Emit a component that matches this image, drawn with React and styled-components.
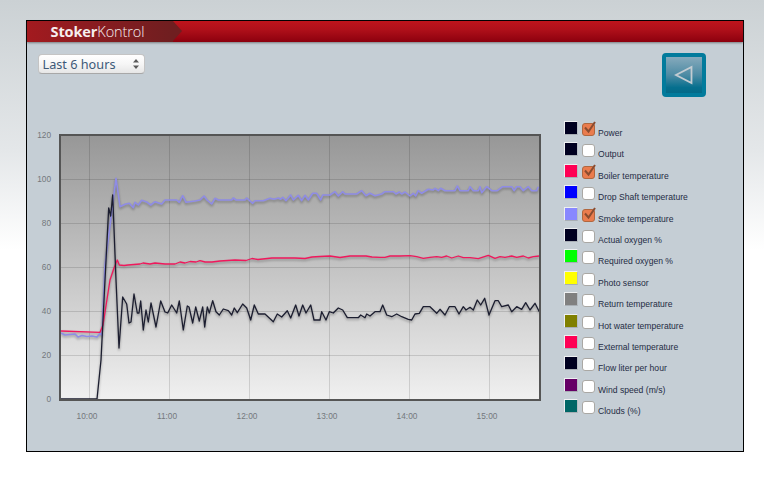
import React from "react";
import styled, { createGlobalStyle } from "styled-components";

const GlobalStyle = createGlobalStyle`
  html, body { margin: 0; padding: 0; }
  body {
    height: 477px;
    overflow: hidden;
    background: linear-gradient(to bottom, #cbd1d4 0, #e4e7e9 150px, #ffffff 250px);
    font-family: "Liberation Sans", Arial, sans-serif;
  }
`;

const Page = styled.div`
  box-sizing: border-box;
  width: 764px;
  padding: 20px 20px 0 26px;
`;

const Panel = styled.div`
  box-sizing: border-box;
  width: 718px;
  height: 432px;
  border: 1px solid #000;
  border-width: 1px 1.5px 1.5px 1.5px;
  background: #c5ced5;
  display: flex;
  flex-direction: column;
`;

const Header = styled.div`
  height: 21px;
  flex: none;
  background: linear-gradient(to bottom, #bf141c 0, #b0101a 40%, #8c000e 100%);
  box-shadow: 0 1px 2px rgba(60, 60, 60, 0.55);
  display: flex;
`;

const LogoPlate = styled.div`
  position: relative;
  width: 146px;
  padding-left: 23.5px;
  box-sizing: border-box;
  background: linear-gradient(to right, #a31a1f 0, #8c1c20 40%, #6f1e20 100%);
  display: flex;
  align-items: center;

  &::after {
    content: "";
    position: absolute;
    left: 146px;
    top: 0;
    border-style: solid;
    border-width: 10.5px 0 10.5px 9px;
    border-color: transparent transparent transparent #6f1e20;
  }
`;

const LogoText = styled.div`
  color: #f6eeee;
  font-family: "Open Sans", "Noto Sans", sans-serif;
  font-size: 14.5px;
  letter-spacing: -0.1px;
  line-height: 21px;
  font-weight: 700;

  span {
    font-weight: 300;
  }
`;

const Toolbar = styled.div`
  flex: none;
  height: 79px;
  box-sizing: border-box;
  padding: 11px 37px 0 10.5px;
  display: flex;
  justify-content: space-between;
  align-items: flex-start;
`;

const SelectWrap = styled.div`
  position: relative;
  width: 107px;
  height: 20px;
  margin-top: 1px;
`;

const RangeSelect = styled.select`
  appearance: none;
  box-sizing: border-box;
  width: 100%;
  height: 100%;
  padding: 0 0 0 4px;
  border: 1px solid #c4c4c4;
  border-bottom-color: #a8a8a8;
  border-radius: 4px;
  background: linear-gradient(to bottom, #ffffff 0, #f6f6f6 50%, #e6e6e6 100%);
  color: #3d5a78;
  font-family: "Noto Sans", "Open Sans", sans-serif;
  font-size: 12.7px;
  line-height: 18px;
  outline: none;
`;

const SelectArrows = styled.svg`
  position: absolute;
  right: 5px;
  top: 4px;
  width: 8px;
  height: 12px;
  pointer-events: none;
`;

const BackButton = styled.button`
  box-sizing: border-box;
  width: 44px;
  height: 44px;
  padding: 0;
  border: 4px solid #027b9c;
  border-radius: 4px;
  background: linear-gradient(to bottom, #86aabc 0, #4d8ba4 50%, #056f8e 85%, #056a88 100%);
  display: flex;
  align-items: center;
  justify-content: center;
`;

const Content = styled.div`
  flex: 1;
  display: flex;
  align-items: flex-start;
`;

const ChartWrap = styled.div`
  flex: none;
  width: 537px;
  height: 300px;
  margin-top: 1px;
`;

const Legend = styled.ul`
  list-style: none;
  margin: 0;
  padding: 0;
  display: flex;
  flex-direction: column;
`;

const LegendRow = styled.li`
  height: 21.4px;
  display: flex;
  align-items: flex-start;
`;

const Swatch = styled.span`
  box-sizing: border-box;
  flex: none;
  width: 14px;
  height: 14px;
  background: ${(p) => p.$color};
  border: 1px solid #eef0f2;
  border-right-color: #b8bec4;
  border-bottom-color: #a8aeb4;
`;

const CheckLabel = styled.label`
  display: flex;
  align-items: flex-start;
  margin-left: 4px;
`;

const CheckWrap = styled.span`
  position: relative;
  flex: none;
  width: 13px;
  height: 13px;
  margin-top: 2px;
`;

const CheckInput = styled.input`
  appearance: none;
  box-sizing: border-box;
  display: block;
  margin: 0;
  width: 13px;
  height: 13px;
  border: 1px solid #aaa8a4;
  border-radius: 3px;
  background: #fff;

  &:checked {
    background: #ea7c4e;
    border-color: #b0673f;
  }
`;

const CheckMark = styled.svg`
  position: absolute;
  left: 1px;
  top: -2px;
  width: 13px;
  height: 13px;
  pointer-events: none;
`;

const LabelText = styled.span`
  margin: 6px 0 0 3px;
  font-size: 8.6px;
  line-height: 12px;
  color: #1f2c44;
  white-space: nowrap;
`;

const AxisText = styled.text`
  font-family: "Liberation Sans", Arial, sans-serif;
  font-size: 8.3px;
  fill: #74787c;
`;

const legendItems = [
  { name: "Power", color: "#000020", checked: true },
  { name: "Output", color: "#000020" },
  { name: "Boiler temperature", color: "#ff0055", checked: true },
  { name: "Drop Shaft temperature", color: "#0000ff" },
  { name: "Smoke temperature", color: "#8888ff", checked: true },
  { name: "Actual oxygen %", color: "#000020" },
  { name: "Required oxygen %", color: "#00ff00" },
  { name: "Photo sensor", color: "#ffff00" },
  { name: "Return temperature", color: "#808080" },
  { name: "Hot water temperature", color: "#808000" },
  { name: "External temperature", color: "#ff0055" },
  { name: "Flow liter per hour", color: "#000020" },
  { name: "Wind speed (m/s)", color: "#660066" },
  { name: "Clouds (%)", color: "#006666" },
];

// chart is drawn in page pixels, the viewBox shifts it to the wrapper
const yTicks = [
  [120, 135],
  [100, 179],
  [80, 223],
  [60, 267],
  [40, 311],
  [20, 355],
  [0, 399],
];
const xTicks = [
  ["10:00", 89],
  ["11:00", 169],
  ["12:00", 249],
  ["13:00", 329],
  ["14:00", 409],
  ["15:00", 489],
];

const power =
  "61,399 97,399 101,360 105,280 108.7,208 110.7,216 112.7,195 116,280 119,348 122.7,297 125,301 126.7,304 129,323 131,322 134,294 137.3,313 139,313 140.7,301 143.3,330 146,310 148.3,322 151,303 156,327 160.7,301 165,312 167.7,313 171.7,305 176.7,313 179.3,301 183.3,330 187.3,306 189,307 192.7,323 195.7,307 199.3,321 202.7,307 204.7,327 207.3,307 209.3,313 212.7,300.7 216,311.7 219.3,315 223.3,309 228.3,310.7 231.7,315 234.3,308 237.3,312.7 242.7,304 246.7,308 250.7,320 254.3,305 258.3,314 265,314 273.3,321.7 277.3,314 281.7,317 287.3,310.7 290.7,318 295.7,305 299,316 302.7,305 306,313 310.7,305 314,320 320,320 321.7,311.7 326,320 329.3,311.7 333.3,313 338.3,308 342.7,310 347.3,317.7 358.3,317.7 360.7,315 365,317.7 366.7,314 370,316 375,311.7 380,311.7 382.7,305 386.7,315 391.7,316.7 396.7,314 401.7,316.7 408.3,319.3 411.7,320 415,314 419.3,313.3 423.3,306.7 430,306.7 436.7,313.3 440,309.3 445,315 449.3,306.7 455,306.7 459,314 463.3,306.7 466,310 470,307.3 473.3,310 477.3,300 480.7,305 484.7,298.3 489,315 495,300.7 498.3,300.7 501.7,306.7 508.3,305 511.7,311.7 516.7,306.7 521.7,309.3 525.7,302.7 530,310 535,303.3 539.3,311.7";

const boiler =
  "61,331 100,332.3 103,325 110,280 114,268 117.3,260 119.3,265 124,265.5 128,265 140,264 143,263 150,264 155,263 165,264 175,264 180,262 185,263 190,261.5 196,262 200,260.7 205,262 212,262 220,261 235,260 246,260.5 252,258.5 258,259.5 272,258 285,258 295,258 305,258.5 312,257 320,256.5 330,256 340,257.5 350,256 356,256 366,256 372,257 380,257.3 385,257.3 390,256 400,256 410,255.7 416.7,256.7 423.3,258.3 430,257.3 436.7,256.7 441.7,257.3 446.7,256 451.7,258 458.3,256 463.3,257.7 470,257.7 478.3,258.7 488.3,255.3 495,258.3 500,256.7 505,257.3 511.7,256 516.7,257.3 523.3,256 528.3,258 533.3,256.7 539.3,256";

const smoke =
  "61,333 65,335 70,334.5 75,334 78,337 82,335.5 87,336.5 92,336 97,337 100,333.5 102,335 105,265 116,178.3 120,206.7 125,204.3 129.3,203.3 133.3,207.7 135,202.3 138.3,205 141.7,200.3 147.3,202.3 150.7,205 155,201.7 161.7,204 165,200 176.7,200 179.3,202.3 182.7,195.7 186,202.3 195,201 200,200 204,196 207,200 211.7,204 215,198.3 218.3,200 231.7,200 233.3,198 236,200 245,200 246.7,198 252.7,203.3 255,200.7 263.3,200.7 270,198.3 274,199.3 278.3,198 280.7,199.3 282.7,197.3 286,200.7 290.7,195 293.3,200 298.3,195.3 301.7,200.7 305,195.3 308.3,200 312.7,193.3 316.7,193.3 320.7,200 322.7,195 330,195 335,191.7 338.3,196 342.7,191.7 345,194 356.7,194 361.7,190.7 366,195.7 370,193.3 375,195.7 381.7,194 385,191.7 393.3,191.7 396,194 399.3,192 401.7,194 405,192 410,196 413.3,193.3 415.7,196 418.3,190.7 421.7,193.3 428.3,189.3 433.3,190 435,188.3 438.3,190.7 440.7,188.3 445,190.7 455,190.7 457.3,186 460,190.7 468.3,190.7 470,186.7 473.3,190.7 478.3,190.7 480,186.7 481.7,192.7 486.7,186.7 491.7,190.7 497.3,190.7 502.7,186.7 511.7,186.7 514,190.7 516.7,186.7 520,186.7 523.3,190.7 528.3,186.7 531.7,190.7 536.7,190.7 538.3,186.7";

const series = [
  { points: smoke, color: "#8f8ce6", width: 1.6 },
  { points: boiler, color: "#f0185c", width: 1.3 },
  { points: power, color: "#1c1e30", width: 1.3 },
];

function Chart() {
  return (
    <svg width="537" height="300" viewBox="27 122 537 300">
      <defs>
        <linearGradient id="plotBg" x1="0" y1="0" x2="0" y2="1">
          <stop offset="0" stopColor="#979797" />
          <stop offset="1" stopColor="#f0f0f0" />
        </linearGradient>
        <clipPath id="plotClip">
          <rect x="60" y="135" width="480" height="265" />
        </clipPath>
        <filter id="lineShadow" x="-5%" y="-5%" width="110%" height="110%">
          <feGaussianBlur stdDeviation="0.8" />
        </filter>
      </defs>
      <rect x="60" y="135" width="480" height="265" fill="url(#plotBg)" />
      {yTicks.map(([label, y]) => (
        <g key={label}>
          <line x1="60" x2="540" y1={y + 0.5} y2={y + 0.5} stroke="#000" strokeOpacity="0.13" />
          <AxisText x="51" y={y + 3} textAnchor="end">
            {label}
          </AxisText>
        </g>
      ))}
      {xTicks.map(([label, x]) => (
        <g key={label}>
          <line x1={x + 0.5} x2={x + 0.5} y1="135" y2="400" stroke="#000" strokeOpacity="0.13" />
          <AxisText x={x - 2} y="419" textAnchor="middle">
            {label}
          </AxisText>
        </g>
      ))}
      <g clipPath="url(#plotClip)" fill="none" strokeLinejoin="round">
        <g filter="url(#lineShadow)">
          {series.map((s) => (
            <polyline
              key={s.color}
              points={s.points}
              stroke="#000"
              strokeOpacity="0.22"
              strokeWidth={s.width + 0.8}
              transform="translate(0 1.6)"
            />
          ))}
        </g>
        {series.map((s) => (
          <polyline key={s.color} points={s.points} stroke={s.color} strokeWidth={s.width} />
        ))}
      </g>
      <rect x="60" y="135" width="480" height="265" fill="none" stroke="#555" strokeWidth="2" />
    </svg>
  );
}

export default function App() {
  return (
    <Page>
      <GlobalStyle />
      <Panel>
        <Header>
          <LogoPlate>
            <LogoText>
              Stoker<span>Kontrol</span>
            </LogoText>
          </LogoPlate>
        </Header>
        <Toolbar>
          <SelectWrap>
            <RangeSelect defaultValue="6">
              <option value="6">Last 6 hours</option>
              <option value="12">Last 12 hours</option>
              <option value="24">Last 24 hours</option>
            </RangeSelect>
            <SelectArrows viewBox="0 0 8 12">
              <path d="M4 1 L7 4.5 H1 Z M4 11 L7 7.5 H1 Z" fill="#5a5a5a" />
            </SelectArrows>
          </SelectWrap>
          <BackButton aria-label="Back">
            <svg width="20" height="20" viewBox="0 0 20 20">
              <path d="M17.5 2 V18 L2 10 Z" fill="none" stroke="#c3ccd2" strokeWidth="1.8" />
            </svg>
          </BackButton>
        </Toolbar>
        <Content>
          <ChartWrap>
            <Chart />
          </ChartWrap>
          <Legend>
            {legendItems.map((item) => (
              <LegendRow key={item.name}>
                <Swatch $color={item.color} />
                <CheckLabel>
                  <CheckWrap>
                    <CheckInput type="checkbox" defaultChecked={!!item.checked} />
                    {item.checked && (
                      <CheckMark viewBox="0 0 13 13">
                        <path d="M2 6.5 L5.5 10.5 L12 1" fill="none" stroke="#8a4c30" strokeWidth="2" />
                      </CheckMark>
                    )}
                  </CheckWrap>
                  <LabelText>{item.name}</LabelText>
                </CheckLabel>
              </LegendRow>
            ))}
          </Legend>
        </Content>
      </Panel>
    </Page>
  );
}
